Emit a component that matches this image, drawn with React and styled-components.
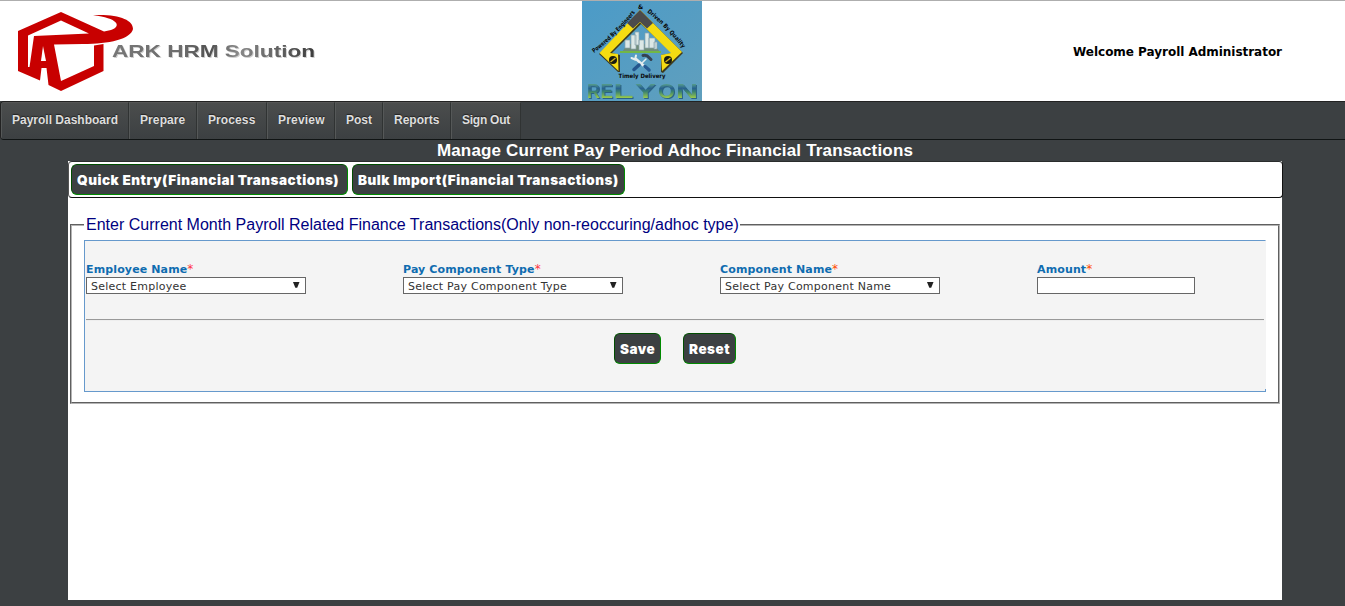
import React from "react";
import styled, { createGlobalStyle } from "styled-components";

const Global = createGlobalStyle`
  *, *::before, *::after { box-sizing: border-box; }
  html, body { margin: 0; height: 100%; overflow: hidden; }
  body { background: #3c4042; font-family: "DejaVu Sans", Verdana, sans-serif; }
`;

const Page = styled.div`
  height: 606px;
  display: flex;
  flex-direction: column;
  background: #3c4042;
`;

const Header = styled.header`
  height: 101px;
  flex: none;
  display: grid;
  grid-template-columns: 582px 120px 1fr;
  background: #fff;
  border-top: 1px solid #aeaeae;
`;

const BrandSlot = styled.div`
  padding: 9px 0 0 16px;
  svg { display: block; }
`;

const PartnerSlot = styled.div`
  svg { display: block; }
`;

const Welcome = styled.div`
  padding: 43px 63px 0 0;
  text-align: right;
  white-space: nowrap;
  font: bold 12px/16px "DejaVu Sans", Verdana, sans-serif;
  letter-spacing: -0.03px;
  color: #000;
`;

const Nav = styled.nav`
  height: 39px;
  flex: none;
  display: flex;
  border: 1px solid #222;
  border-bottom-color: #101414;
  border-right: 0;
  border-radius: 4px 0 0 4px;
  background: #3c4042;
  overflow: hidden;
`;

const NavItem = styled.a`
  width: ${(p) => p.$width}px;
  flex: none;
  padding-left: 10px;
  border-left: 1px solid #555858;
  border-right: 1px solid #303333;
  border-top: 1px solid #555;
  background: linear-gradient(#4b4d4d, #3c4042);
  color: #dedede;
  white-space: nowrap;
  font: bold 12px/34px "Liberation Sans", Arial, sans-serif;
  letter-spacing: ${(p) => p.$spacing}px;
  text-shadow: 0 -1px 1px #222;
`;

const Title = styled.h1`
  margin: 0;
  height: 21px;
  flex: none;
  padding-left: 5px;
  text-align: center;
  color: #fff;
  font: bold 17px/22px "Liberation Sans", Arial, sans-serif;
  letter-spacing: 0.17px;
`;

const Content = styled.main`
  width: 1214px;
  height: 439px;
  flex: none;
  margin-left: 68px;
  background: #fff;
`;

const TabBar = styled.div`
  width: 1215px;
  height: 37px;
  display: flex;
  gap: 4px;
  padding: 2px;
  border: 1px solid #111;
  border-top-color: #2a2c2c;
  border-left-color: #555;
  border-radius: 4px;
`;

const ActionButton = styled.button`
  width: ${(p) => p.$width}px;
  height: 31px;
  flex: none;
  padding: 1px 0 0 5px;
  border: 1px solid;
  border-color: #004d00 #008a00 #008a00 #004d00;
  border-radius: 6px;
  background: #3c4042;
  color: #fff;
  text-align: left;
  white-space: nowrap;
  font: 900 13.5px/28px Inter, "Arial Black", sans-serif;
  letter-spacing: 0.51px;
`;

const FieldGroup = styled.fieldset`
  margin: 17px 2px 0;
  height: 189px;
  min-width: 0;
  padding: 5px 12px 0;
  border: 2px groove #b4b4b4;
`;

const Legend = styled.legend`
  height: 20px;
  padding: 0 1px 0 2px;
  color: #000080;
  white-space: nowrap;
  font: 16px/20px "Liberation Sans", Arial, sans-serif;
  letter-spacing: 0.01px;
`;

const FormPanel = styled.div`
  position: relative;
  width: 1182px;
  height: 152px;
  border: 1px solid #6699cc;
  border-right-color: #f4f4f4;
  background: #f4f4f4;
  padding: 21px 1px 0;
  &::after {
    content: "";
    position: absolute;
    right: -1px;
    bottom: -1px;
    width: 1px;
    height: 3px;
    background: #6699cc;
  }
`;

const Fields = styled.div`
  display: grid;
  grid-template-columns: repeat(4, 317px);
  height: 57px;
`;

const Label = styled.label`
  display: block;
  height: 15px;
  color: #0f6cb0;
  white-space: nowrap;
  font: bold 11px/15px "DejaVu Sans", Verdana, sans-serif;
  letter-spacing: 0.13px;
`;

const Required = styled.span`
  color: ${(p) => p.$color};
  font-weight: normal;
  font-size: 12px;
  line-height: 1;
`;

const Select = styled.div`
  width: 220px;
  height: 17px;
  display: flex;
  justify-content: space-between;
  padding: 0 4px;
  border: 1px solid #666;
  background: #fff;
  color: #333;
  white-space: nowrap;
  font: 11px/17px "DejaVu Sans", Verdana, sans-serif;
  letter-spacing: 0.24px;
  svg { margin: 4px 1px 0 0; }
`;

const AmountInput = styled.input`
  display: block;
  width: 158px;
  height: 17px;
  padding: 0 4px;
  border: 1px solid #666;
  background: #fff;
`;

const Divider = styled.hr`
  margin: 0;
  height: 2px;
  border: 0;
  border-top: 1px solid #999;
  border-bottom: 1px solid #eee;
`;

const Actions = styled.div`
  display: flex;
  gap: 22px;
  padding: 12px 0 0 528px;
`;

const ShadedText = styled.g`
  font-family: "Liberation Sans", Arial, sans-serif;
  font-weight: bold;
  font-size: ${(p) => p.$size}px;
  filter: drop-shadow(1px 1px 0 ${(p) => p.$shade});
`;

function ArkLogo() {
  return (
    <svg width="310" height="84" viewBox="16 10 310 84">
      <defs>
        <linearGradient id="steel" x1="0" y1="0" x2="1" y2="0">
          <stop offset="0" stopColor="#777" />
          <stop offset=".35" stopColor="#6c6c6c" />
          <stop offset=".48" stopColor="#505050" />
          <stop offset=".62" stopColor="#8a8a8a" />
          <stop offset="1" stopColor="#3c3c3c" />
        </linearGradient>
      </defs>
      <path d="M18 31 L61 12 L104 31.500 L111 30 C122 26 118 18 93 15.200 C119 14 133 20 133 29 C131 39 109 44 83 44 L54 44.500 L61 81 L94 66 L94 45.500 L103.500 44 L103.500 71 L61 91 L48.500 85 L46.500 68 L41.500 68 L40 80.500 L18 71 Z" fill="#c80000" />
      <path d="M28 35.500 L61 20.500 L89 33.500 L34 36 L29.500 67 L28 67 Z" fill="#fff" />
      <path d="M43 46 L46 61 L41 61 Z" fill="#fff" />
      <ShadedText $size={17} $shade="#d0d0d0">
        <text x="112" y="57" fill="url(#steel)" textLength="203" lengthAdjust="spacingAndGlyphs">ARK HRM Solution</text>
      </ShadedText>
    </svg>
  );
}

const relyonLetters = [
  ["R", 5, 13],
  ["E", 18.5, 12.5],
  ["L", 31.5, 20],
  ["Y", 53, 21],
  ["O", 76, 17],
  ["N", 94, 22],
];

function RelyonLogo() {
  return (
    <svg width="120" height="100" viewBox="0 0 120 100">
      <defs>
        <linearGradient id="sky" x1="0" y1="0" x2="1" y2="1">
          <stop offset="0" stopColor="#4b9bc8" />
          <stop offset="1" stopColor="#609fbd" />
        </linearGradient>
        <linearGradient id="word" gradientUnits="userSpaceOnUse" x1="0" y1="81" x2="0" y2="97">
          <stop offset="0" stopColor="#6bb887" />
          <stop offset=".4" stopColor="#27618f" />
          <stop offset=".6" stopColor="#3b8270" />
          <stop offset="1" stopColor="#9acb4c" />
        </linearGradient>
        <path id="leftArc" d="M12 52 Q37 33 55 9" />
        <path id="rightArc" d="M65 11 Q85 27 101 48" />
      </defs>
      <rect width="120" height="100" fill="url(#sky)" />
      <path d="M59 10 L101 52 L81 72 L79 71 L79 54 L90 52 L59 23 L30 52 L38 54 L38 71 L36 71 L17 53 Z" fill="#3c3a20" />
      <path d="M58 9 L100 51 L80 70 L79 54 L89 52 L58 21.500 L28 52 L36 53 L36.500 70 L17.500 52 Z" fill="#f4dc12" />
      <path d="M58 9 L71 22 L65 27.500 L58 21 L51 27.500 L45 22 Z" fill="#4b4b4b" />
      <path d="M40 51 L46 43 L72 43 L78 51 Z" fill="#708d79" />
      <path d="M38 51 H79" stroke="#71b746" strokeWidth="2" />
      <path d="M43 39h5v8h-5zM49 34h5v14h-5zM53 31h4v13h-4zM57 39h5v10h-5zM63 32h4v15h-4zM67 37h6v10h-6zM72 41h3v7h-3z" fill="#dce8e6" stroke="#8ba5ad" strokeWidth=".7" />
      <g strokeLinecap="round" fill="none">
        <path d="M54 58 L66 68.500" stroke="#e7eef0" strokeWidth="2.500" />
        <path d="M49.500 57 l3.500 1.500 l1 -4" stroke="#e8eeee" strokeWidth="2" />
        <path d="M64 58 L59 63" stroke="#e4ecef" strokeWidth="1.500" />
        <path d="M57 64 L52 68.500" stroke="#24558c" strokeWidth="3.500" />
        <path d="M61 54.500 q4-1 6 2 l2 2" stroke="#354252" strokeWidth="3" />
        <path d="M63 65.500 L67 69" stroke="#255b94" strokeWidth="3.500" />
      </g>
      <g fill="#181b10">
        <circle cx="31" cy="59" r="4" /><circle cx="86" cy="59" r="4" />
      </g>
      <path d="M28.500 61 l5-4 M83.500 61 l5-4" stroke="#d7b519" strokeWidth="1.300" />
      <g fill="#080808" fontFamily="DejaVu Sans, sans-serif" fontWeight="bold" fontSize="6">
        <text><textPath href="#leftArc" textLength="58" lengthAdjust="spacingAndGlyphs">Powered By Engineers</textPath></text>
        <text x="56" y="8">&amp;</text>
        <text><textPath href="#rightArc" textLength="51" lengthAdjust="spacingAndGlyphs">Driven By Quality</textPath></text>
        <text x="36.500" y="77" textLength="47" lengthAdjust="spacingAndGlyphs">Timely Delivery</text>
      </g>
      <ShadedText $size={21} $shade="#2b6285">
        {relyonLetters.map(([letter, x, width]) => (
          <text key={letter} x={x} y="96.500" fill="url(#word)" textLength={width} lengthAdjust="spacingAndGlyphs">{letter}</text>
        ))}
      </ShadedText>
    </svg>
  );
}

const menu = [
  ["Payroll Dashboard", 128, 0],
  ["Prepare", 68, 0.1],
  ["Process", 70, 0.1],
  ["Preview", 68, 0.2],
  ["Post", 48, 0],
  ["Reports", 68, 0],
  ["Sign Out", 70, -0.25],
];

const fields = [
  { label: "Employee Name", value: "Select Employee", star: "#ff3344" },
  { label: "Pay Component Type", value: "Select Pay Component Type", star: "#ff3344" },
  { label: "Component Name", value: "Select Pay Component Name", star: "#ff4a00" },
  { label: "Amount", star: "#ff4a00" },
];

function Field({ label, value, star }) {
  return (
    <div>
      <Label>{label}<Required $color={star}>*</Required></Label>
      {value ? (
        <Select>
          <span>{value}</span>
          <svg width="7" height="7" viewBox="0 0 7 7"><path d="M0 0h6.500L4.200 5.800H2.300z" fill="#222" /></svg>
        </Select>
      ) : (
        <AmountInput aria-label={label} />
      )}
    </div>
  );
}

export default function App() {
  return (
    <>
      <Global />
      <Page>
        <Header>
          <BrandSlot><ArkLogo /></BrandSlot>
          <PartnerSlot><RelyonLogo /></PartnerSlot>
          <Welcome>Welcome Payroll Administrator</Welcome>
        </Header>
        <Nav>
          {menu.map(([name, width, spacing]) => (
            <NavItem key={name} $width={width} $spacing={spacing}>{name}</NavItem>
          ))}
        </Nav>
        <Title>Manage Current Pay Period Adhoc Financial Transactions</Title>
        <Content>
          <TabBar>
            <ActionButton $width={277}>Quick Entry(Financial Transactions)</ActionButton>
            <ActionButton $width={273}>Bulk Import(Financial Transactions)</ActionButton>
          </TabBar>
          <FieldGroup>
            <Legend>Enter Current Month Payroll Related Finance Transactions(Only non-reoccuring/adhoc type)</Legend>
            <FormPanel>
              <Fields>{fields.map((f) => <Field key={f.label} {...f} />)}</Fields>
              <Divider />
              <Actions>
                <ActionButton $width={47}>Save</ActionButton>
                <ActionButton $width={53}>Reset</ActionButton>
              </Actions>
            </FormPanel>
          </FieldGroup>
        </Content>
      </Page>
    </>
  );
}
